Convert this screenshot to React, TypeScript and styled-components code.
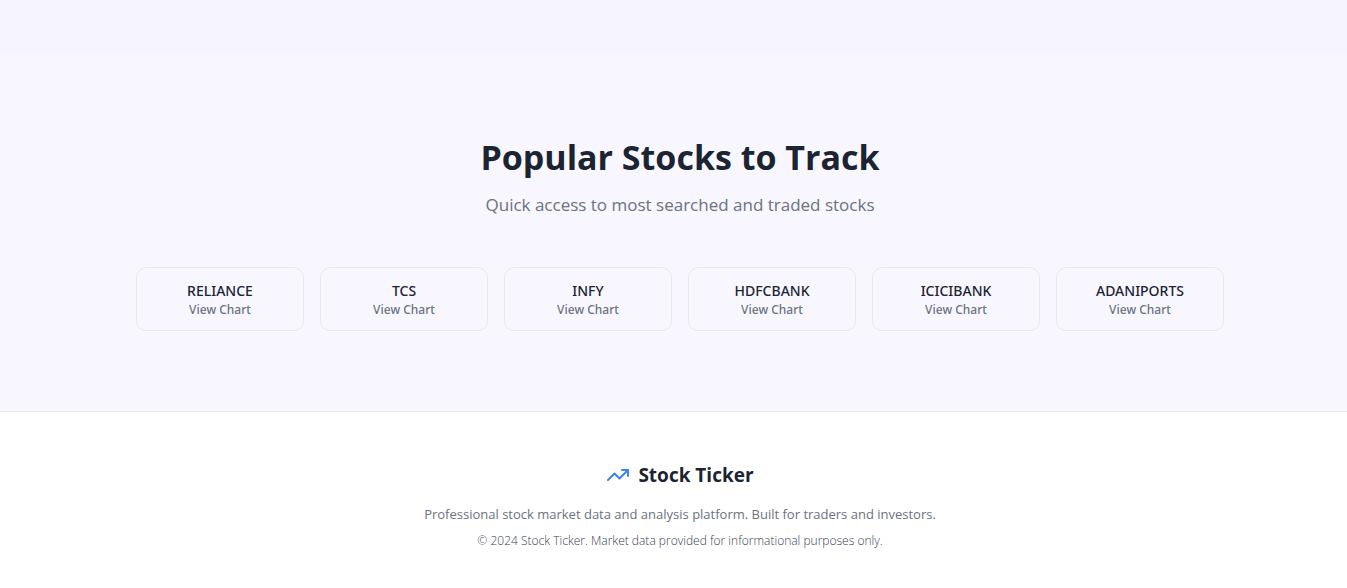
import React from "react";
import styled, { createGlobalStyle } from "styled-components";
import { TrendingUp } from "lucide-react";

const GlobalStyle = createGlobalStyle`
  *, *::before, *::after { box-sizing: border-box; }
  body {
    margin: 0;
    background: #ffffff;
    color: #1c2431;
    font-family: "Segoe UI", "Open Sans", "Noto Sans", sans-serif;
  }
  h2, p { margin: 0; }
`;

const Page = styled.div`
  display: flex;
  flex-direction: column;
  overflow-x: hidden;
`;

const PreviousBand = styled.div`
  height: 55px;
  background: #f6f4ff;
`;

const Container = styled.div`
  max-width: 1152px;
  margin: 0 auto;
  padding: 0 32px;
`;

const PopularSection = styled.section`
  padding: 80px 0 80px 13px;
  background: #f8f7ff;
`;

const SectionHeader = styled.header`
  display: flex;
  flex-direction: column;
  gap: 12px;
  margin-bottom: 48px;
  text-align: center;
`;

const Title = styled.h2`
  font-size: 34px;
  line-height: 44px;
  font-weight: 700;
`;

const Subtitle = styled.p`
  font-size: 17px;
  line-height: 28px;
  color: #6b7280;
`;

const StockGrid = styled.div`
  display: grid;
  grid-template-columns: repeat(6, minmax(0, 1fr));
  gap: 16px;

  @media (max-width: 900px) {
    grid-template-columns: repeat(2, minmax(0, 1fr));
  }
`;

const StockButton = styled.button`
  display: flex;
  flex-direction: column;
  align-items: center;
  gap: 1px;
  min-height: 64px;
  padding: 13px 16px 12px;
  border: 1px solid #e8e8ed;
  border-radius: 10px;
  background: transparent;
  color: inherit;
  font-family: "Segoe UI", "Noto Sans", "Open Sans", sans-serif;
  font-weight: 500;
  cursor: pointer;
`;

const Symbol = styled.span`
  font-size: 14px;
  line-height: 20px;
`;

const Hint = styled.span`
  font-size: 12px;
  line-height: 16px;
  color: #6b7280;
`;

const Footer = styled.footer`
  padding: 48px 0 40px 13px;
  border-top: 1px solid #e5e7eb;
  background: #ffffff;
  text-align: center;
`;

const Brand = styled.div`
  display: flex;
  align-items: center;
  justify-content: center;
  gap: 8px;
  margin-bottom: 14px;
`;

const BrandName = styled.span`
  font-size: 19px;
  line-height: 30px;
  font-weight: 700;
`;

const Tagline = styled.p`
  margin-bottom: 8px;
  font-size: 13px;
  line-height: 20px;
  color: #6b7280;
`;

const Legal = styled.p`
  font-size: 12px;
  line-height: 18px;
  font-weight: 300;
  color: #374151;
`;

const stocks = ["RELIANCE", "TCS", "INFY", "HDFCBANK", "ICICIBANK", "ADANIPORTS"];

export default function App() {
  return (
    <>
      <GlobalStyle />
      <Page>
        <PreviousBand />
        <PopularSection>
          <Container>
            <SectionHeader>
              <Title>Popular Stocks to Track</Title>
              <Subtitle>Quick access to most searched and traded stocks</Subtitle>
            </SectionHeader>
            <StockGrid>
              {stocks.map((symbol) => (
                <StockButton key={symbol} type="button">
                  <Symbol>{symbol}</Symbol>
                  <Hint>View Chart</Hint>
                </StockButton>
              ))}
            </StockGrid>
          </Container>
        </PopularSection>
        <Footer>
          <Container>
            <Brand>
              <TrendingUp size={24} color="#3b82f6" aria-hidden="true" />
              <BrandName>Stock Ticker</BrandName>
            </Brand>
            <Tagline>
              Professional stock market data and analysis platform. Built for traders and investors.
            </Tagline>
            <Legal>© 2024 Stock Ticker. Market data provided for informational purposes only.</Legal>
          </Container>
        </Footer>
      </Page>
    </>
  );
}
